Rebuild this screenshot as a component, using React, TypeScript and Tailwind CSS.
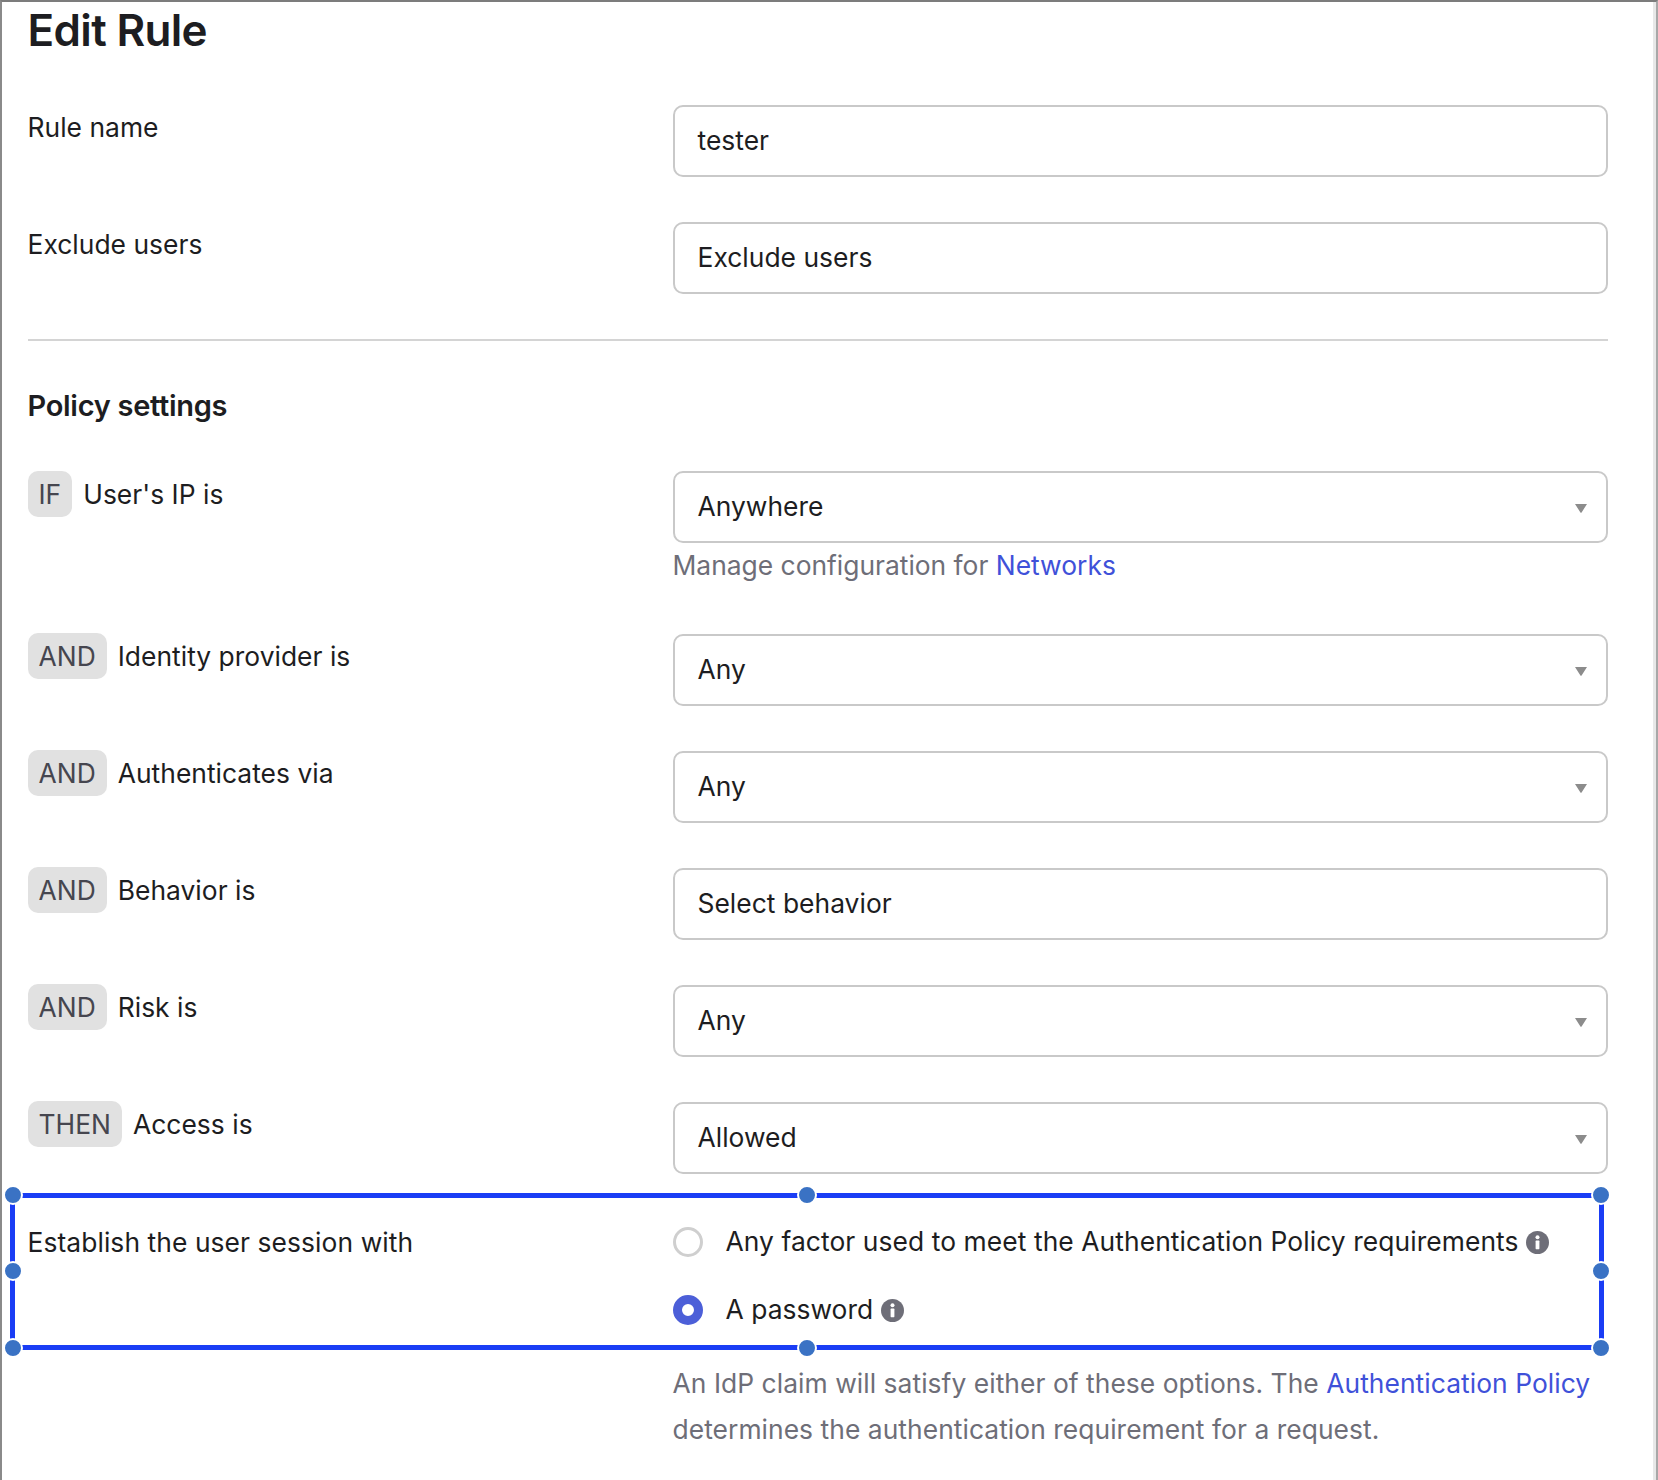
const font = { fontFamily: 'Inter, "Liberation Sans", sans-serif' };

function Caret() {
  return (
    <svg width="12" height="9" viewBox="0 0 12 9" className="absolute right-[19px] top-[31px]">
      <path d="M0 0H12L6.6 8.4C6.3 8.9 5.7 8.9 5.4 8.4Z" fill="#8c8c8c" />
    </svg>
  );
}

function Field({ value, select }: { value: string; select?: boolean }) {
  return (
    <div className="relative flex h-[72px] items-center rounded-[10px] border-2 border-[#c9c9c9] bg-white pl-[23px] text-[#1d1d21]">
      {value}
      {select && <Caret />}
    </div>
  );
}

function Info() {
  return (
    <svg width="23" height="23" viewBox="0 0 23 23" className="shrink-0">
      <circle cx="11.5" cy="11.5" r="11.5" fill="#6e6e78" />
      <circle cx="11.5" cy="6.2" r="2" fill="#fff" />
      <rect x="9.6" y="9.6" width="3.8" height="8.6" rx="0.6" fill="#fff" />
    </svg>
  );
}

function Row({
  pill,
  label,
  children,
  className,
  labelClass,
}: {
  pill?: string;
  label: string;
  children: React.ReactNode;
  className?: string;
  labelClass?: string;
}) {
  return (
    <div className={`grid grid-cols-[645px_935px] ${className ?? ''}`}>
      <div className={`flex h-[46px] items-center leading-[46px] text-[#1d1d21] ${labelClass ?? ''}`}>
        {pill && (
          <span className="mr-[11px] flex h-[46px] items-center rounded-[10px] bg-[#e1e1e1] px-[11px] text-[#46464f]">{pill}</span>
        )}
        {label}
      </div>
      <div>{children}</div>
    </div>
  );
}

const handles = [
  'left-0 top-0',
  'left-1/2 top-0',
  'left-full top-0',
  'left-0 top-1/2',
  'left-full top-1/2',
  'left-0 top-full',
  'left-1/2 top-full',
  'left-full top-full',
];

function SelectionBox() {
  return (
    <div className="pointer-events-none absolute left-[-17.5px] right-[49.5px] top-[-26.5px] bottom-[-17px] border-[5px] border-[#1a3df5]">
      <div className="absolute -inset-[2.5px]">
        {handles.map((h) => (
          <span
            key={h}
            className={`absolute ${h} box-content h-[16px] w-[16px] -translate-x-1/2 -translate-y-1/2 rounded-full border-2 border-white bg-[#3a72c4]`}
          />
        ))}
      </div>
    </div>
  );
}

export default function App() {
  return (
    <div
      style={font}
      className="h-[1480px] w-[1658px] overflow-hidden border-l-2 border-r-2 border-t-2 border-l-[#8a8a8a] border-r-[#a8a8a8] border-t-[#7c7c7c] bg-white pl-[25.5px] text-[26.4px] tracking-[0.001em]"
    >
      <div className="h-full border-r-[3px] border-[#e8e8e8]">
        <h1 className="h-[56px] text-[44px] font-semibold leading-[56px] tracking-[-0.015em] text-[#1d1d21]">Edit Rule</h1>

        <Row label="Rule name" labelClass="-mt-px" className="mt-[47px]">
          <Field value="tester" />
        </Row>
        <Row label="Exclude users" labelClass="-mt-px" className="mt-[45px]">
          <Field value="Exclude users" />
        </Row>

        <div className="mt-[45px] h-[2px] w-[1580px] bg-[#d4d4d4]" />

        <h2 className="mt-[45px] h-[40px] text-[29px] font-semibold leading-[40px] tracking-[-0.01em] text-[#1d1d21]">Policy settings</h2>

        <Row pill="IF" label="User's IP is" className="mt-[45px]">
          <Field value="Anywhere" select />
          <p className="leading-[45px] tracking-normal text-[#6e6e78]">
            Manage configuration for <a className="text-[#3f51d9]">Networks</a>
          </p>
        </Row>
        <Row pill="AND" label="Identity provider is" labelClass="-mt-px" className="mt-[46px]">
          <Field value="Any" select />
        </Row>
        <Row pill="AND" label="Authenticates via" labelClass="-mt-px" className="mt-[45px]">
          <Field value="Any" select />
        </Row>
        <Row pill="AND" label="Behavior is" labelClass="-mt-px" className="mt-[45px]">
          <Field value="Select behavior" />
        </Row>
        <Row pill="AND" label="Risk is" labelClass="-mt-px" className="mt-[45px]">
          <Field value="Any" select />
        </Row>
        <Row pill="THEN" label="Access is" labelClass="-mt-px" className="mt-[45px]">
          <Field value="Allowed" select />
        </Row>

        <div className="relative mt-[45px]">
          <Row label="Establish the user session with" labelClass="tracking-[0.003em]">
            <div className="flex flex-col gap-[22px]">
              <label className="flex h-[46px] items-center text-[#1d1d21]">
                <span className="mr-[23px] h-[30px] w-[30px] rounded-full border-[3px] border-[#cfcfcf] bg-white" />
                <span className="mr-[7px] tracking-[0.003em]">Any factor used to meet the Authentication Policy requirements</span>
                <Info />
              </label>
              <label className="flex h-[46px] items-center text-[#1d1d21]">
                <span className="mr-[23px] h-[30px] w-[30px] rounded-full border-[9.5px] border-[#4c5fd8] bg-white" />
                <span className="mr-[8px]">A password</span>
                <Info />
              </label>
            </div>
          </Row>
          <SelectionBox />
        </div>

        <div className="grid grid-cols-[645px_935px]">
          <div />
          <p className="mt-[28px] leading-[45.5px] tracking-[0.002em] text-[#6e6e78]">
            An IdP claim will satisfy either of these options. The <a className="text-[#3f51d9]">Authentication Policy</a> determines the authentication requirement for a request.
          </p>
        </div>
      </div>
    </div>
  );
}
